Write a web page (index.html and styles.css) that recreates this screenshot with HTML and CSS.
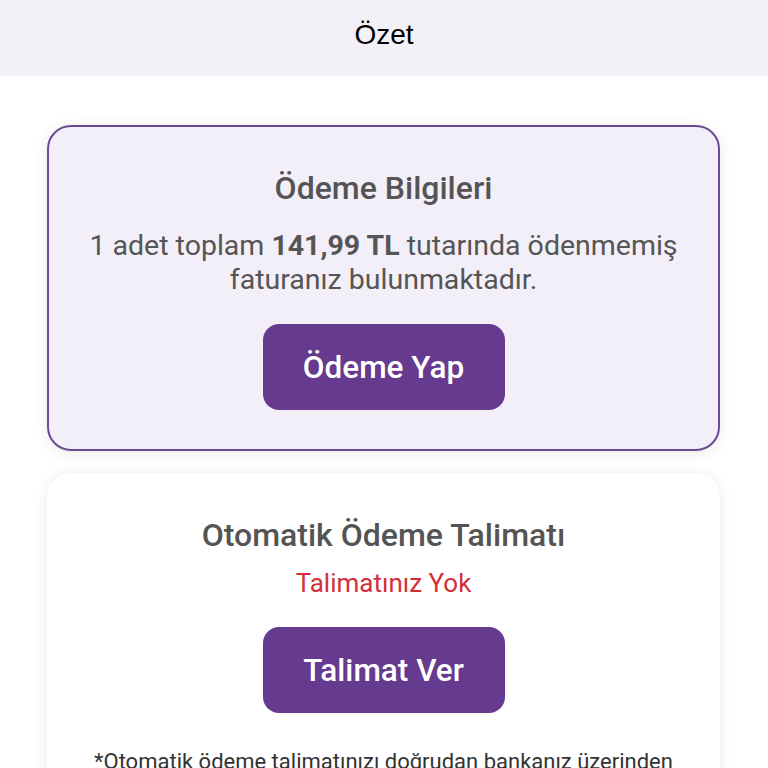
FILE: index.html
```html
<!DOCTYPE html>
<html lang="tr">
<head>
<meta charset="utf-8">
<title>Özet</title>
<link rel="stylesheet" href="styles.css">
</head>
<body>
<header class="topbar"><h1 class="topbar-title">Özet</h1></header>
<main class="content">
  <section class="card card-highlight">
    <h2 class="card-title">Ödeme Bilgileri</h2>
    <p class="card-text">1 adet toplam <strong>141,99 TL</strong> tutarında ödenmemiş faturanız bulunmaktadır.</p>
    <button class="btn">Ödeme Yap</button>
  </section>
  <section class="card">
    <h2 class="card-title">Otomatik Ödeme Talimatı</h2>
    <p class="status">Talimatınız Yok</p>
    <button class="btn btn-second">Talimat Ver</button>
    <p class="note">*Otomatik ödeme talimatınızı doğrudan bankanız üzerinden verebilirsiniz.</p>
  </section>
</main>
</body>
</html>
```
FILE: styles.css
```css
html, body { margin: 0; padding: 0; background: #ffffff; }
body { font-family: Roboto, "Noto Sans", sans-serif; overflow: hidden; height: 768px; }
.topbar { height: 76px; background: #f3f0f7; display: flex; align-items: center; justify-content: center; }
.topbar-title { margin: 0; font-family: "Liberation Sans", Arial, sans-serif; font-weight: 400; font-size: 28px; color: #000; line-height: 1; margin-top: -6px; }
.content { padding: 49px 48px 0 47px; display: flex; flex-direction: column; gap: 22px; }
.card { background: #fff; border-radius: 24px; box-shadow: 0 2px 14px rgba(0,0,0,0.09); padding: 44px 20px 40px; display: flex; flex-direction: column; align-items: center; text-align: center; }
.card-highlight { background: #f3eff8; border: 2px solid #6b4b95; padding: 43px 20px 39px; }
.card-title { margin: 0; font-size: 32px; font-weight: 500; line-height: 36px; color: #545454; }
.card-text { margin: 23px 0 0; font-size: 28.5px; line-height: 34px; color: #555555; max-width: 610px; }
.card-text strong { font-weight: 700; }
.btn { margin-top: 27px; width: 242px; height: 86px; border: none; border-radius: 16px; background: #663a8f; color: #fff; font-family: Roboto, sans-serif; font-size: 31.5px; font-weight: 500; }
.btn-second { margin-top: 28px; }
.status { margin: 14px 0 0; font-size: 26px; line-height: 32px; color: #d32f3a; }
.note { margin: 34px 0 0; font-size: 22px; line-height: 30px; color: #333; }
```
